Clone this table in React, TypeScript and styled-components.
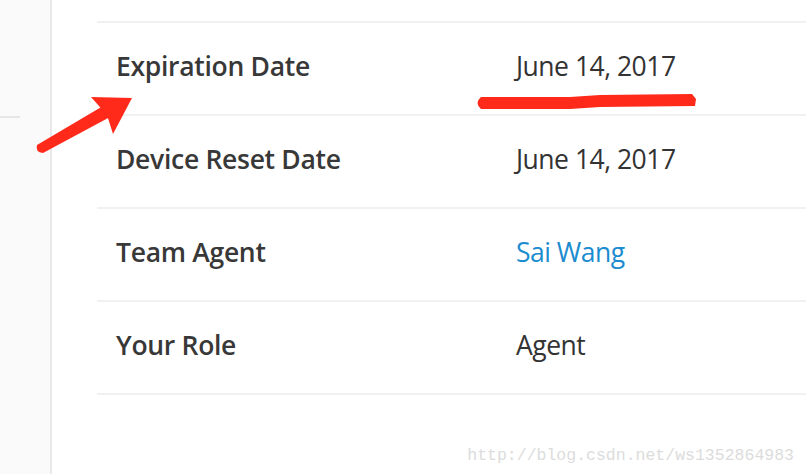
import React from 'react';
import styled, { createGlobalStyle } from 'styled-components';

const GlobalStyle = createGlobalStyle`
  html, body, #root {
    margin: 0;
    padding: 0;
    height: 100%;
  }
  body {
    background: #ffffff;
    font-family: "Open Sans", "Noto Sans", sans-serif;
    overflow: hidden;
  }
`;

const Page = styled.div`
  position: relative;
  display: flex;
  width: 806px;
  height: 474px;
  background: #ffffff;
`;

const Sidebar = styled.aside`
  width: 50px;
  flex-shrink: 0;
  background: #fafafa;
  border-right: 2px solid #e9e9e9;
`;

const NavDivider = styled.div`
  width: 20px;
  height: 2px;
  margin-top: 116px;
  background: #e6e6e6;
`;

const Main = styled.main`
  flex: 1;
  padding: 21px 0 0 45px;
`;

const DetailList = styled.dl`
  margin: 0;
  border-top: 2px solid #f1f1f1;
`;

const Row = styled.div`
  display: flex;
  align-items: center;
  box-sizing: border-box;
  height: 93px;
  padding: 0 0 5px 19px;
  border-bottom: 2px solid #f1f1f1;
`;

const Label = styled.dt`
  width: 400px;
  margin: 0;
  font-size: 26.5px;
  font-weight: 600;
  color: #383838;
  letter-spacing: -0.3px;
`;

const Value = styled.dd<{ $link?: boolean }>`
  margin: 0;
  font-size: 26.5px;
  font-weight: 400;
  color: ${p => (p.$link ? '#1b8ccf' : '#333333')};
  letter-spacing: -0.5px;
`;

const Annotation = styled.svg`
  position: absolute;
  left: 0;
  top: 0;
  pointer-events: none;
`;

const Watermark = styled.div`
  position: absolute;
  right: 12px;
  bottom: 9px;
  font-family: "Liberation Mono", "DejaVu Sans Mono", monospace;
  font-size: 16.5px;
  color: #dcdcdc;
`;

const details = [
  { label: 'Expiration Date', value: 'June 14, 2017' },
  { label: 'Device Reset Date', value: 'June 14, 2017' },
  { label: 'Team Agent', value: 'Sai Wang', link: true },
  { label: 'Your Role', value: 'Agent' },
];

const App: React.FC = () => {
  return (
    <>
      <GlobalStyle />
      <Page>
        <Sidebar>
          <NavDivider />
        </Sidebar>
        <Main>
          <DetailList>
            {details.map(item => (
              <Row key={item.label}>
                <Label>{item.label}</Label>
                <Value $link={item.link}>{item.value}</Value>
              </Row>
            ))}
          </DetailList>
        </Main>

        <Annotation width="806" height="474" viewBox="0 0 806 474">
          {/* arrow */}
          <path
            d="M37 145 L103 106 L110 117 L43 153 Q35 152 37 145 Z"
            fill="#ff2a1a"
          />
          <path d="M91 97 L132 98 L113 134 L107 115 Z" fill="#ff2a1a" />
          {/* underline */}
          <path
            d="M481 97 L570 97 L600 95 L692 94 L696 99 L695 106 L600 107 L570 109 L481 109 Q474 103 481 97 Z"
            fill="#ff2a1a"
          />
        </Annotation>

        <Watermark>http://blog.csdn.net/ws1352864983</Watermark>
      </Page>
    </>
  );
};

export default App;
